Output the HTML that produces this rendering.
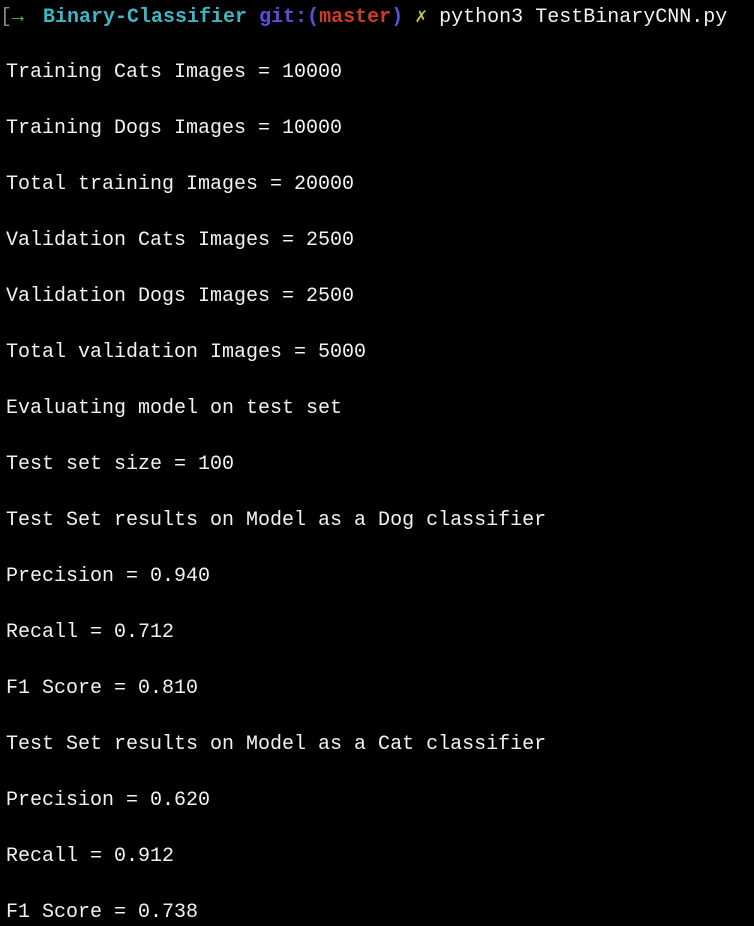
<!DOCTYPE html>
<html><head><style>
html,body{margin:0;padding:0;background:#000;width:754px;height:926px;overflow:hidden}
.l{position:absolute;left:6px;font-family:"Liberation Mono","DejaVu Sans Mono",monospace;font-size:20px;color:#f2f2f2;white-space:pre;line-height:24px}
b{font-weight:bold}
</style></head><body>
<div class="l" style="top:6px;left:0"><span style="color:#888">[</span><span style="color:#3fcf3f;font-weight:bold">→</span></div>
<div class="l" style="top:6px;left:43px"><b style="color:#3bb8c4">Binary-Classifier</b> <b style="color:#5a4fe0">git:(</b><b style="color:#d03a2a">master</b><b style="color:#5a4fe0">)</b> <b style="color:#c8c040">✗</b> python3 TestBinaryCNN.py</div>
<div class="l" style="top:61px">Training Cats Images = 10000</div>
<div class="l" style="top:117px">Training Dogs Images = 10000</div>
<div class="l" style="top:173px">Total training Images = 20000</div>
<div class="l" style="top:229px">Validation Cats Images = 2500</div>
<div class="l" style="top:285px">Validation Dogs Images = 2500</div>
<div class="l" style="top:341px">Total validation Images = 5000</div>
<div class="l" style="top:397px">Evaluating model on test set</div>
<div class="l" style="top:453px">Test set size = 100</div>
<div class="l" style="top:509px">Test Set results on Model as a Dog classifier</div>
<div class="l" style="top:565px">Precision = 0.940</div>
<div class="l" style="top:621px">Recall = 0.712</div>
<div class="l" style="top:677px">F1 Score = 0.810</div>
<div class="l" style="top:733px">Test Set results on Model as a Cat classifier</div>
<div class="l" style="top:789px">Precision = 0.620</div>
<div class="l" style="top:845px">Recall = 0.912</div>
<div class="l" style="top:901px">F1 Score = 0.738</div>
</body></html>
